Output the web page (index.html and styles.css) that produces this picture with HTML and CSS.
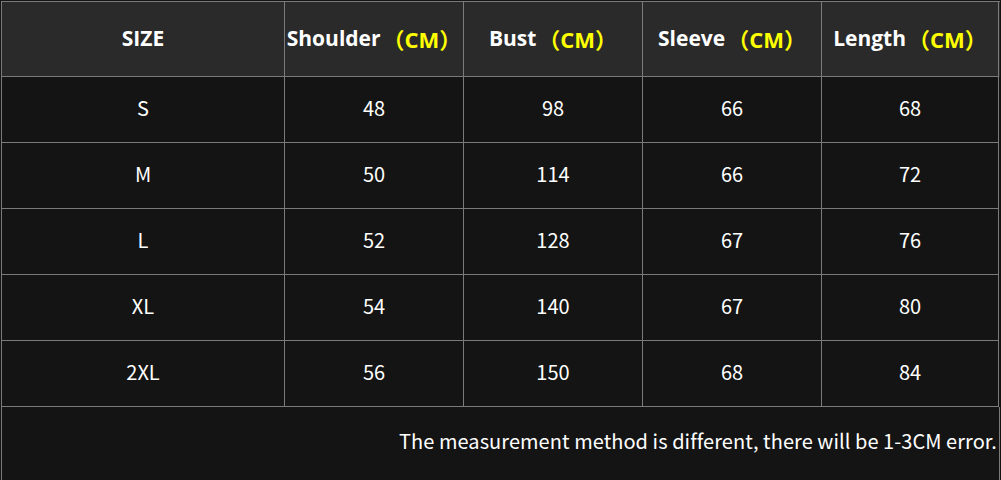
FILE: index.html
```html
<!DOCTYPE html>
<html>
<head>
<meta charset="utf-8">
<link rel="stylesheet" href="styles.css">
</head>
<body>
<div class="table">
  <div class="row head">
    <div class="cell">SIZE</div>
    <div class="cell">Shoulder <span class="unit">（CM）</span></div>
    <div class="cell">Bust <span class="unit">（CM）</span></div>
    <div class="cell">Sleeve <span class="unit">（CM）</span></div>
    <div class="cell">Length <span class="unit">（CM）</span></div>
  </div>
  <div class="row"><div class="cell">S</div><div class="cell">48</div><div class="cell">98</div><div class="cell">66</div><div class="cell">68</div></div>
  <div class="row"><div class="cell">M</div><div class="cell">50</div><div class="cell">114</div><div class="cell">66</div><div class="cell">72</div></div>
  <div class="row"><div class="cell">L</div><div class="cell">52</div><div class="cell">128</div><div class="cell">67</div><div class="cell">76</div></div>
  <div class="row"><div class="cell">XL</div><div class="cell">54</div><div class="cell">140</div><div class="cell">67</div><div class="cell">80</div></div>
  <div class="row"><div class="cell">2XL</div><div class="cell">56</div><div class="cell">150</div><div class="cell">68</div><div class="cell">84</div></div>
  <div class="note">The measurement method is different, there will be 1-3CM error.</div>
</div>
</body>
</html>
```
FILE: styles.css
```css
html, body {
  margin: 0;
  padding: 0;
  background: #141414;
}
body {
  width: 1001px;
  height: 480px;
  overflow: hidden;
  font-family: "Noto Sans CJK SC", "Noto Sans", sans-serif;
  color: #ffffff;
}
.table {
  margin: 1px 0 0 1px;
  width: 999px;
  border-top: 1px solid #7a7a7a;
  border-left: 1px solid #7a7a7a;
  box-sizing: border-box;
  background: #141414;
}
.row {
  display: grid;
  grid-template-columns: 283px 179px 179px 179px 177px;
  height: 66px;
}
.row.head {
  height: 75px;
  background: #2a2a2a;
  font-weight: bold;
  font-family: "Open Sans", "Noto Sans CJK SC", sans-serif;
}
.cell {
  border-right: 1px solid #7a7a7a;
  border-bottom: 1px solid #7a7a7a;
  display: flex;
  align-items: center;
  justify-content: center;
  font-size: 20px;
  white-space: nowrap;
  padding-bottom: 4px;
  box-sizing: border-box;
}
.head .cell {
  font-size: 21px;
  padding-bottom: 2px;
}
.unit {
  color: #ffff00;
  font-size: 22px;
  margin-left: 2px;
}
.note {
  height: 73px;
  display: flex;
  align-items: center;
  justify-content: flex-end;
  padding-right: 2px;
  padding-bottom: 7px;
  box-sizing: border-box;
  font-size: 20px;
  letter-spacing: 0.06px;
  border-right: 1px solid #7a7a7a;
}
```
